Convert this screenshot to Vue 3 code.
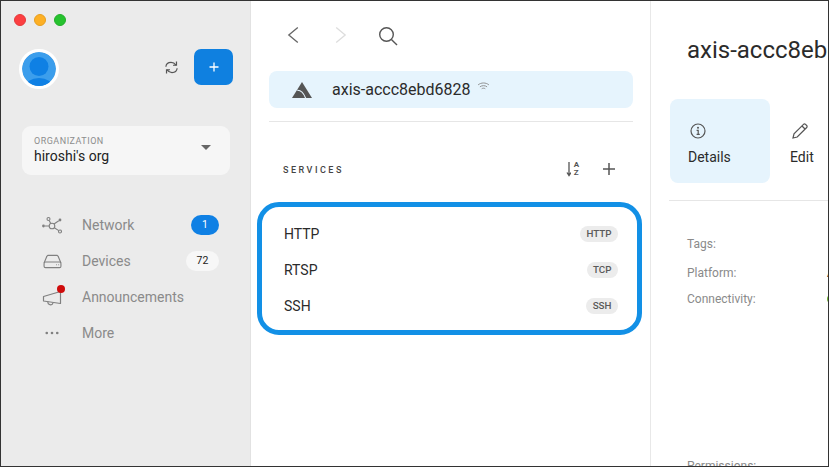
<script setup>
const nav = [
  { id: 'network', label: 'Network', badge: '1', tone: 'blue' },
  { id: 'devices', label: 'Devices', badge: '72', tone: 'light' },
  { id: 'announcements', label: 'Announcements' },
  { id: 'more', label: 'More' }
]
const services = [
  { name: 'HTTP', type: 'HTTP' },
  { name: 'RTSP', type: 'TCP' },
  { name: 'SSH', type: 'SSH' }
]
</script>

<template>
  <div class="window">
    <aside class="sidebar">
      <div class="lights">
        <span class="light red"></span><span class="light amber"></span><span class="light green"></span>
      </div>
      <div class="top">
        <div class="avatar">
          <svg viewBox="0 0 34 34" width="34" height="34">
            <circle cx="17" cy="17" r="17" fill="#3c9eec" />
            <circle cx="17" cy="14.500" r="9.500" fill="#0f80e4" />
            <ellipse cx="17" cy="35" rx="14" ry="9" fill="#0f80e4" />
          </svg>
        </div>
        <svg class="sync" viewBox="0 0 16 16" width="15" height="15" fill="none" stroke="#555" stroke-width="1.300">
          <path d="M2 7.200C2.300 4.300 4.700 2.600 7.500 2.600c2.300 0 3.900 1 5.200 2.800" />
          <path d="M13.300 1.700v3.900H9.600" />
          <path d="M14 8.800c-.3 2.900-2.700 4.600-5.500 4.600-2.300 0-3.900-1-5.200-2.800" />
          <path d="M2.700 14.300v-3.900h3.700" />
        </svg>
        <button class="add">
          <svg viewBox="0 0 10 10" width="10" height="10"><path d="M5 .5v9M.5 5h9" stroke="#fff" stroke-width="1.300" /></svg>
        </button>
      </div>
      <div class="org">
        <div>
          <div class="org-label">ORGANIZATION</div>
          <div class="org-name">hiroshi's org</div>
        </div>
        <span class="caret"></span>
      </div>
      <nav class="nav">
        <div v-for="n in nav" :key="n.id" class="nav-row">
          <span class="nav-icon">
            <svg v-if="n.id === 'network'" viewBox="0 0 20 20" width="20" height="20" fill="none" stroke="#808080" stroke-width="1.100">
              <circle cx="10" cy="11" r="2.800" />
              <circle cx="6.500" cy="4" r="1.500" />
              <circle cx="18" cy="16.500" r="1.500" />
              <path d="M7.200 5.400l1.500 3.200M12.300 12.700l4.500 2.900M7.200 11H3M12 9l4.800-3.200" />
              <circle cx="1.500" cy="11" r="1.400" fill="#808080" stroke="none" />
              <circle cx="18" cy="5" r="1.400" fill="#808080" stroke="none" />
            </svg>
            <svg v-else-if="n.id === 'devices'" viewBox="0 0 20 16" width="19" height="15" fill="none" stroke="#808080" stroke-width="1.200">
              <path d="M1 9.500 4 2.500a1.500 1.500 0 0 1 1.300-1h9.400a1.500 1.500 0 0 1 1.300 1l3 7" />
              <rect x="1" y="8.500" width="18" height="6" rx="1.500" />
              <path d="M14 11.500h.8M16.200 11.500h.8" />
            </svg>
            <svg v-else-if="n.id === 'announcements'" viewBox="0 0 20 18" width="20" height="18" fill="none" stroke="#808080" stroke-width="1.200">
              <path d="M1.500 8.500 18.500 3.500v12L1.500 13z" stroke-linejoin="round" />
              <path d="M6 13.600a2.500 2.500 0 0 0 5 1.200" />
            </svg>
            <svg v-else viewBox="0 0 16 4" width="14" height="4" fill="#808080">
              <circle cx="2" cy="2" r="1.500" /><circle cx="8" cy="2" r="1.500" /><circle cx="14" cy="2" r="1.500" />
            </svg>
            <span v-if="n.id === 'announcements'" class="alert"></span>
          </span>
          <span class="nav-label">{{ n.label }}</span>
          <span v-if="n.badge" class="count" :class="n.tone">{{ n.badge }}</span>
        </div>
      </nav>
    </aside>

    <main class="middle">
      <div class="toolbar">
        <svg viewBox="0 0 12 18" width="12" height="18" fill="none" stroke="#666" stroke-width="1.300"><path d="M10.800 1.500 1.800 9l9 7.500" /></svg>
        <svg viewBox="0 0 12 18" width="12" height="18" fill="none" stroke="#ddd" stroke-width="1.300"><path d="M1.200 1.500 10.200 9l-9 7.500" /></svg>
        <svg viewBox="0 0 20 20" width="20" height="20" fill="none" stroke="#555" stroke-width="1.400">
          <circle cx="8.500" cy="8.500" r="6.800" /><path d="M13.400 13.400 19 19" />
        </svg>
      </div>
      <div class="device">
        <svg class="logo" viewBox="0 0 20 16" width="20" height="16">
          <path fill="#555" d="M10 0 20 16H0z" />
          <path fill="none" stroke="#e6f4fd" stroke-width="1.100" d="M5.200 8.200Q10.500 7.800 13.800 16.500" />
        </svg>
        <span class="device-name">axis-accc8ebd6828</span>
        <svg class="wifi" viewBox="0 0 14 10" width="13" height="9" fill="none" stroke="#888" stroke-width="1">
          <path d="M1 3.200c3.400-2.800 8.600-2.800 12 0M3 5.400c2.400-1.800 5.600-1.800 8 0M5 7.500c1.200-.8 2.800-.8 4 0" />
        </svg>
      </div>
      <div class="rule"></div>
      <div class="section">
        <span class="section-title">SERVICES</span>
        <div class="section-tools">
          <span class="sort">
            <svg viewBox="0 0 7 16" width="7" height="16" fill="none" stroke="#555" stroke-width="1.300"><path d="M5 1v13.500M3 11.500l2 3 2-3" /></svg>
            <span class="az"><span>A</span><span>Z</span></span>
          </span>
          <svg class="plus" viewBox="0 0 12 12" width="12" height="12"><path d="M6 0v12M0 6h12" stroke="#555" stroke-width="1.500" /></svg>
        </div>
      </div>
      <div class="services">
        <div v-for="s in services" :key="s.name" class="service">
          <span>{{ s.name }}</span>
          <span class="tag">{{ s.type }}</span>
        </div>
      </div>
    </main>

    <section class="detail">
      <h1 class="title">axis-accc8ebd6828</h1>
      <div class="tabs">
        <div class="tab active">
          <svg viewBox="0 0 16 16" width="16" height="16" fill="none" stroke="#555" stroke-width="1.200">
            <circle cx="8" cy="8" r="7" />
            <circle cx="8" cy="4.800" r="1" fill="#555" stroke="none" />
            <path d="M6.600 7.300H8.200v4M6.600 11.300h3.200" />
          </svg>
          <span>Details</span>
        </div>
        <div class="tab">
          <svg viewBox="0 0 16 16" width="16" height="16" fill="none" stroke="#555" stroke-width="1.200">
            <path d="M1 15l1-4.200L11.500 1.300a1.400 1.400 0 0 1 2 0l1.200 1.200a1.400 1.400 0 0 1 0 2L5.200 14z" />
            <path d="M10 3l3 3" />
          </svg>
          <span>Edit</span>
        </div>
      </div>
      <div class="rule detail-rule"></div>
      <div class="attrs">
        <div class="attr tags">Tags:</div>
        <div class="attr platform"><span class="attr-name">Platform:</span><span class="attr-value">Axis</span></div>
        <div class="attr connectivity"><span class="attr-name">Connectivity:</span><span class="online"></span></div>
        <div class="attr permissions">Permissions:</div>
      </div>
    </section>
  </div>
</template>

<style>
html, body { margin: 0; background: #fff; overflow: hidden; }
</style>

<style scoped>
.window {
  box-sizing: border-box;
  width: 829px;
  height: 467px;
  display: flex;
  overflow: hidden;
  border: 1px solid #333;
  font-family: Roboto, sans-serif;
  font-size: 14px;
  color: #2b2b2b;
  background: #fff;
}
.sidebar {
  box-sizing: border-box;
  flex: 0 0 250px;
  background: #ebebeb;
  border-right: 1px solid #e2e2e2;
  padding: 13px 17px 0 13px;
}
.lights { display: flex; gap: 8px; }
.light { width: 12px; height: 12px; border-radius: 50%; box-sizing: border-box; }
.red { background: #fc3f41; border: 1px solid #e5393b; }
.amber { background: #fdb025; border: 1px solid #e79f1e; }
.green { background: #26c22e; border: 1px solid #22ae2a; }

.top { display: flex; align-items: center; margin: 23px 0 0 5px; height: 36px; }
.avatar {
  width: 34px; height: 34px; border: 3px solid #fff; border-radius: 50%;
  overflow: hidden; margin-top: 4px;
}
.avatar svg { display: block; }
.sync { margin-left: 105px; }
.add {
  width: 39px; height: 36px; margin-left: 15px; padding: 0; border: 0; border-radius: 7px;
  background: #0f80e0; display: flex; align-items: center; justify-content: center;
}

.org {
  width: 208px; height: 49px; box-sizing: border-box; margin: 41px 0 0 8px;
  padding: 10px 19px 0 12px; background: #f6f6f6; border-radius: 9px;
  display: flex; justify-content: space-between; align-items: flex-start;
}
.org-label { font-size: 9px; line-height: 10px; letter-spacing: .5px; color: #8d8d8d; }
.org-name { font-size: 14px; line-height: 18px; margin-top: 1px; color: #222; }
.caret {
  margin-top: 9px; width: 0; height: 0;
  border-left: 5px solid transparent; border-right: 5px solid transparent; border-top: 5px solid #666;
}

.nav { margin: 32px 0 0 28px; width: 177px; }
.nav-row { height: 36px; display: flex; align-items: center; }
.nav-icon { position: relative; width: 20px; margin-right: 20px; display: flex; justify-content: center; }
.nav-label { flex: 1; color: #8a8a8a; }
.alert {
  position: absolute; top: -3px; right: -3px; width: 8px; height: 8px;
  border-radius: 50%; background: #cf0b0b;
}
.count {
  height: 20px; border-radius: 10px; font-size: 10.500px; line-height: 20px; text-align: center;
}
.count.blue { width: 28px; background: #0f80e4; color: #fff; }
.count.light { width: 33px; background: #f7f7f7; color: #222; }

.middle {
  box-sizing: border-box; flex: 0 0 400px; padding: 0 17px 0 18px;
  border-right: 1px solid #e8e8e8;
}
.toolbar { height: 70px; display: flex; align-items: center; padding-left: 18px; box-sizing: border-box; padding-bottom: 2px; }
.toolbar svg:nth-child(2) { margin-left: 36px; }
.toolbar svg:nth-child(3) { margin-left: 31px; margin-top: 2px; }
.device {
  height: 37px; background: #e6f4fd; border-radius: 8px; display: flex; align-items: center; padding-left: 23px;
}
.device-name { margin-left: 20px; font-size: 16px; color: #2b2b2b; }
.wifi { margin: -6px 0 0 6px; }
.logo { flex: none; }
.rule { height: 1px; background: #e6e6e6; margin-top: 13px; }
.section {
  display: flex; justify-content: space-between; align-items: center;
  height: 36px; margin-top: 30px; padding: 0 18px 0 14px;
}
.section-title { font-size: 9px; font-weight: 500; letter-spacing: 2.500px; color: #444; }
.section-tools { display: flex; align-items: center; gap: 24px; }
.sort { display: flex; align-items: center; gap: 3px; margin-top: -2px; }
.plus { margin-top: -2px; }
.az { display: flex; flex-direction: column; font-size: 8px; line-height: 8.500px; font-weight: 700; color: #555; }
.services {
  margin: 14px -9px 0 -12px; padding: 9px 19px 8px 22px; height: 133px; box-sizing: border-box;
  border: 5px solid #1290e6; border-radius: 22px;
}
.service { height: 36px; display: flex; justify-content: space-between; align-items: center; }
.tag {
  height: 16px; padding: 0 6.500px; border-radius: 8px; background: #ececec;
  font-size: 9.800px; line-height: 16px; font-weight: 500; color: #5a5a5a;
}

.detail { flex: 1; min-width: 0; overflow: hidden; padding-left: 19px; }
.title {
  margin: 34px 0 0 17px; font-size: 24px; line-height: 30px; font-weight: 400; white-space: nowrap; color: #2b2b2b;
}
.tabs { display: flex; margin-top: 34px; height: 84px; }
.tab {
  box-sizing: border-box; width: 100px; flex: none; border-radius: 8px; padding: 24px 0 0 18px;
  display: flex; flex-direction: column; gap: 9px; color: #2b2b2b;
}
.tab svg { margin-left: 2px; }
.tab span { line-height: 18px; }
.tab.active { background: #e6f4fd; }
.tab:not(.active) { padding-left: 20px; }
.detail-rule { margin: 17px -20px 0 -1px; }
.attrs { padding: 36px 0 0 17px; color: #8a8a8a; font-size: 12px; line-height: 14px; }
.attr { margin-bottom: 12px; white-space: nowrap; display: flex; align-items: center; }
.attr.tags { margin-bottom: 15px; }
.attr-name { flex: 0 0 140px; }
.attr-value { color: #2b2b2b; }
.online { width: 8px; height: 8px; border-radius: 50%; background: #6cb52d; flex: none; }
.permissions { margin-top: 153px; }
</style>
